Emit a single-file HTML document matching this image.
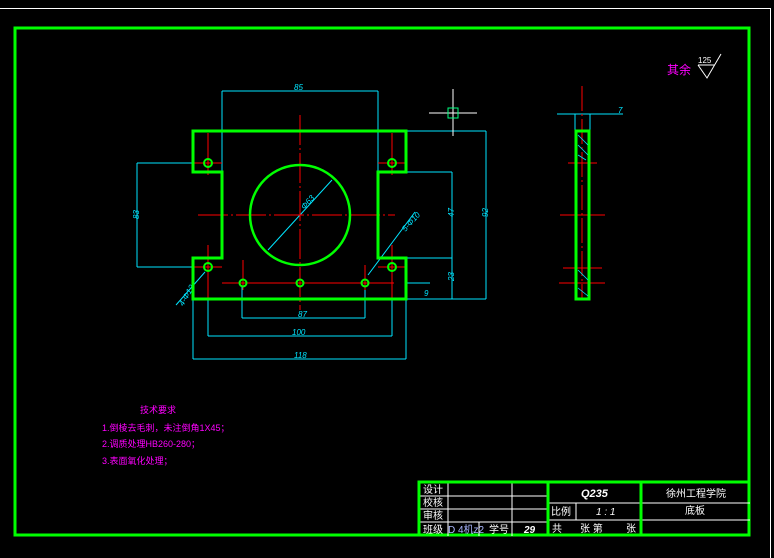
<!DOCTYPE html>
<html><head><meta charset="utf-8"><style>
html,body{margin:0;padding:0;background:#000;}
svg{display:block}
text{font-family:"Liberation Sans","Noto Sans CJK SC",sans-serif;}
</style></head><body>
<svg width="774" height="558" viewBox="0 0 774 558" xmlns="http://www.w3.org/2000/svg">
<rect width="774" height="558" fill="#000"/>
<path d="M0 8.5H770.5V558" stroke="#fff" stroke-width="1" fill="none"/>
<rect x="15" y="28" width="734" height="507" stroke="#00ff00" stroke-width="3" fill="none"/>

<!-- cyan dims -->
<g stroke="#00e5ff" stroke-width="1" fill="none">
<path d="M222 91H378M222 91V172M378 91V172"/>
<path d="M193 359H406M193 299V359M406 299V359"/>
<path d="M208 336H392M208 270V336M392 270V336"/>
<path d="M242 318H365M242 286V318M365 286V318"/>
<path d="M137 163V267M137 163H205M137 267H205"/>
<path d="M406 131H486M378 172H452M406 258H452M406 299H486M406 283H430M452 172V299M486 131V299"/>
<path d="M268 250L332 180M176 305L205 272M368 275L415 212"/>
<path d="M557 114H623M575 114V131M590 114V131"/>
</g>
<g fill="#00e5ff" font-size="8" font-style="italic">
<text x="294" y="90">85</text>
<text x="294" y="358">118</text>
<text x="292" y="335">100</text>
<text x="298" y="317">87</text>
<text x="130" y="220" transform="rotate(-90 134 215)">83</text>
<text x="449" y="218" transform="rotate(-90 451 215)">47</text>
<text x="449" y="282" transform="rotate(-90 451 279)">23</text>
<text x="483" y="218" transform="rotate(-90 485 215)">92</text>
<text x="424" y="296">9</text>
<text x="618" y="113">7</text>
<text x="300" y="210" transform="rotate(-48 302 205)">Φ63</text>
<text x="400" y="230" transform="rotate(-48 405 225)">5-Φ10</text>
<text x="176" y="306" transform="rotate(-60 180 300)">4-Φ12</text>
</g>

<!-- red center lines -->
<g stroke="#ff0000" stroke-width="1" fill="none">
<path d="M300 115V310M198 215H395" stroke-dasharray="30 3 2 3"/>
<path d="M208 133V175M192 163H222M392 133V175M378 163H406M208 245V299M192 267H222M392 245V299M378 267H406M222 283H394M243 260V290M365 265V290"/>
<path d="M582 86V300" stroke-dasharray="25 3 2 3"/>
<path d="M568 163H597M560 215H605M563 268H602M559 283H605"/>
</g>

<!-- part -->
<g stroke="#00ff00" stroke-width="3" fill="none">
<path d="M193 131H406V172H378V258H406V299H193V258H222V172H193Z"/>
<circle cx="300" cy="215" r="50" stroke-width="2.5"/>
<g stroke-width="2"><circle cx="208" cy="163" r="4"/><circle cx="392" cy="163" r="4"/><circle cx="208" cy="267" r="4"/><circle cx="392" cy="267" r="4"/><circle cx="243" cy="283" r="3.5"/><circle cx="300" cy="283" r="3.5"/><circle cx="365" cy="283" r="3.5"/></g>
<rect x="576" y="131" width="13" height="168" stroke-width="3"/>
</g>
<g stroke="#00e5ff" stroke-width="0.8" fill="none">
<path d="M578 135L588 145M578 145L588 155M578 155L586 160M578 236M578 270L588 280M578 288L588 296"/>
</g>

<!-- crosshair -->
<path d="M429 113H477M453 89V136" stroke="#fff" stroke-width="1"/>
<rect x="448" y="108" width="10" height="10" stroke="#00ff80" fill="none"/>

<!-- roughness -->
<text x="667" y="74" fill="#ff00ff" font-size="12">其余</text>
<text x="698" y="63" fill="#fff" font-size="8">125</text>
<path d="M698 65H715M698 65L707 78L721 54" stroke="#fff" stroke-width="1" fill="none"/>

<!-- tech requirements -->
<g fill="#ff00ff" font-size="9">
<text x="140" y="413">技术要求</text>
<text x="102" y="431">1.倒棱去毛刺，未注倒角1X45；</text>
<text x="102" y="447">2.调质处理HB260-280；</text>
<text x="102" y="464">3.表面氧化处理；</text>
</g>

<!-- title block -->
<g stroke="#fff" stroke-width="1" fill="none">
<path d="M419 496H548M419 509H548M419 522H548M448 482V536M512 482V536M479 522V536"/>
<path d="M548 503H750M548 520H750M576 503V520"/>
</g>
<g stroke="#00ff00" stroke-width="3" fill="none">
<path d="M419 536V482H750M548 482V536M641 482V536"/>
</g>
<g fill="#fff" font-size="10">
<text x="423" y="493">设计</text>
<text x="423" y="506">校核</text>
<text x="423" y="519">审核</text>
<text x="423" y="533">班级</text>
<text x="448" y="533" fill="#aab8ff">D 4机z2</text>
<text x="489" y="533">学号</text>
<text x="524" y="533" font-style="italic" font-weight="bold">29</text>
<text x="581" y="497" font-style="italic" font-weight="bold" font-size="11">Q235</text>
<text x="551" y="515">比例</text>
<text x="596" y="515" font-style="italic">1 : 1</text>
<text x="552" y="532">共</text>
<text x="580" y="532">张 第</text>
<text x="626" y="532">张</text>
<text x="666" y="497">徐州工程学院</text>
<text x="685" y="514">底板</text>
</g>
</svg>
</body></html>
